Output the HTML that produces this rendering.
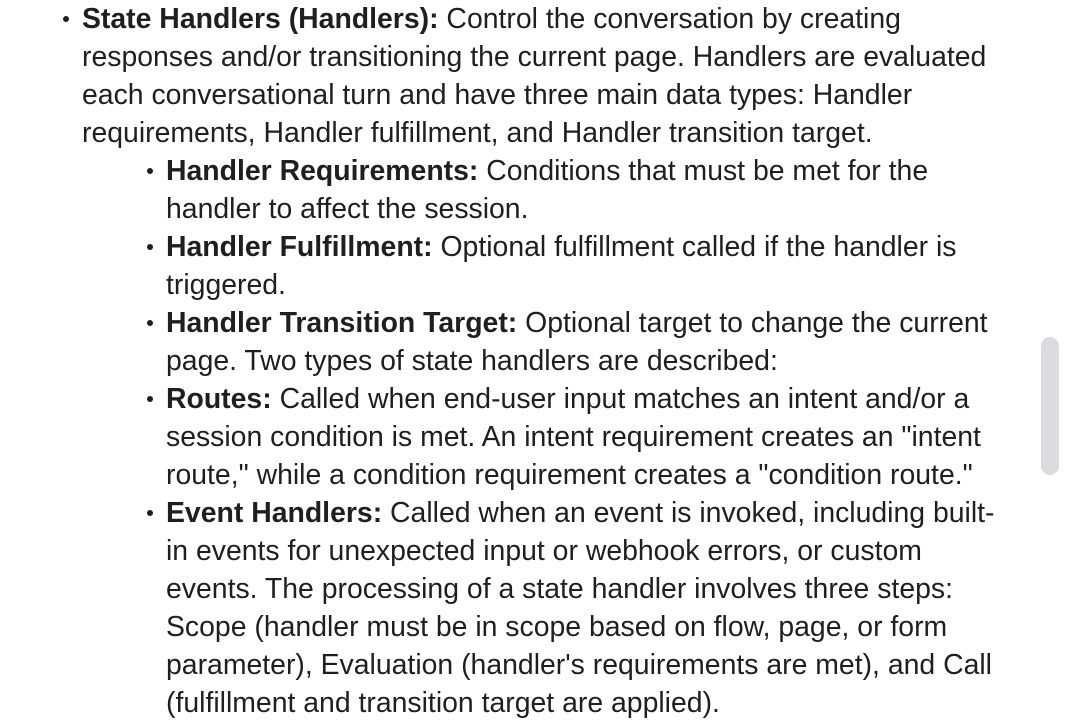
<!DOCTYPE html>
<html><head><meta charset="utf-8"><style>
html,body{margin:0;padding:0;background:#fff;width:1076px;height:726px;overflow:hidden}
body{font-family:"Liberation Sans",sans-serif;font-size:28.4px;color:#1f1f1f;position:relative}
.l{position:absolute;white-space:nowrap;line-height:38px;height:38px}
b{font-weight:bold}
.d{position:absolute;width:6px;height:6px;border-radius:50%;background:#1f1f1f}
.sb{position:absolute;left:1041px;top:337px;width:18px;height:138px;border-radius:9px;background:#dadce0}
</style></head><body>
<div class="d" style="left:63px;top:16px"></div>
<div class="l" style="left:82px;top:0px"><b>State Handlers (Handlers):</b> Control the conversation by creating</div>
<div class="l" style="left:82px;top:38px">responses and/or transitioning the current page. Handlers are evaluated</div>
<div class="l" style="left:82px;top:76px">each conversational turn and have three main data types: Handler</div>
<div class="l" style="left:82px;top:114px">requirements, Handler fulfillment, and Handler transition target.</div>

<div class="d" style="left:147px;top:168px"></div>
<div class="l" style="left:166px;top:152px"><b>Handler Requirements:</b> Conditions that must be met for the</div>
<div class="l" style="left:166px;top:190px">handler to affect the session.</div>
<div class="d" style="left:147px;top:244px"></div>
<div class="l" style="left:166px;top:228px"><b>Handler Fulfillment:</b> Optional fulfillment called if the handler is</div>
<div class="l" style="left:166px;top:266px">triggered.</div>
<div class="d" style="left:147px;top:320px"></div>
<div class="l" style="left:166px;top:304px"><b>Handler Transition Target:</b> Optional target to change the current</div>
<div class="l" style="left:166px;top:342px">page. Two types of state handlers are described:</div>
<div class="d" style="left:147px;top:396px"></div>
<div class="l" style="left:166px;top:380px"><b>Routes:</b> Called when end-user input matches an intent and/or a</div>
<div class="l" style="left:166px;top:418px">session condition is met. An intent requirement creates an "intent</div>
<div class="l" style="left:166px;top:456px">route," while a condition requirement creates a "condition route."</div>
<div class="d" style="left:147px;top:510px"></div>
<div class="l" style="left:166px;top:494px"><b>Event Handlers:</b> Called when an event is invoked, including built-</div>
<div class="l" style="left:166px;top:532px">in events for unexpected input or webhook errors, or custom</div>
<div class="l" style="left:166px;top:570px">events. The processing of a state handler involves three steps:</div>
<div class="l" style="left:166px;top:608px">Scope (handler must be in scope based on flow, page, or form</div>
<div class="l" style="left:166px;top:646px">parameter), Evaluation (handler's requirements are met), and Call</div>
<div class="l" style="left:166px;top:684px">(fulfillment and transition target are applied).</div>
<div class="sb"></div>
</body></html>
